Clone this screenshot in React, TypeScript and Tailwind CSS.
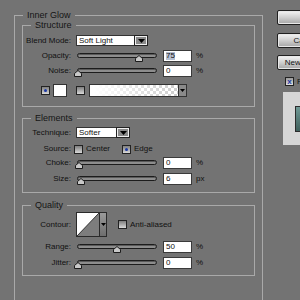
import type { ReactNode } from "react"

const line = "border-[#a9a9a9]"

function Legend({ children }: { children: ReactNode }) {
  return <legend className="ml-[8px] px-[4px] text-[9px] leading-[10px] text-[#151515]">{children}</legend>
}

function Label({ children }: { children: ReactNode }) {
  return <span className="w-[48px] shrink-0 text-right leading-none">{children}</span>
}

function Arrow() {
  return (
    <svg width="7" height="4" viewBox="0 0 7 4">
      <polygon points="0,0 7,0 3.5,4" fill="#000" />
    </svg>
  )
}

function Dropdown({ value, width }: { value: string; width: string }) {
  return (
    <div className={`ml-[5px] flex h-[11px] ${width} border border-[#333] bg-white`}>
      <span className="flex-1 pl-[2px] leading-[9px]">{value}</span>
      <span className="flex w-[12px] items-center justify-center border border-[#eee] bg-[#8a8a8a] outline outline-1 outline-[#222]">
        <Arrow />
      </span>
    </div>
  )
}

function Thumb() {
  return (
    <svg width="8" height="7" viewBox="0 0 8 7">
      <polygon points="4,0.5 7.5,3.5 7.5,6.5 0.5,6.5 0.5,3.5" fill="#c9c9c9" stroke="#1c1c1c" strokeWidth="1" />
    </svg>
  )
}

function SliderRow({ label, value, left, unit, selected }: { label: string; value: string; left: number; unit: string; selected?: boolean }) {
  return (
    <div className="flex h-[12px] items-center">
      <Label>{label}</Label>
      <div className="relative ml-[3px] h-[12px] w-[83px] shrink-0">
        <div className="ml-[3px] mt-[3px] h-[5px] w-[80px] rounded-full border border-[#1c1c1c] bg-[#8d8d8d] shadow-[inset_0_1px_0_#5a5a5a]" />
        <span className="absolute top-[5px] flex" style={{ left }}>
          <Thumb />
        </span>
      </div>
      <div className="ml-[6px] flex h-[12px] w-[29px] shrink-0 items-center border border-[#3a3a3a] bg-white pl-[2px]">
        <span className={selected ? "bg-[#b6c0d2] leading-none" : "leading-none"}>{value}</span>
      </div>
      <span className="ml-[4px] leading-none">{unit}</span>
    </div>
  )
}

function Box({ dot }: { dot?: boolean }) {
  return (
    <span className="flex h-[9px] w-[9px] shrink-0 items-center justify-center border border-[#222] bg-linear-to-b from-[#7e7e7e] to-[#dadada]">
      {dot && <span className="h-[3px] w-[3px] rounded-full bg-[#1d3aa6]" />}
    </span>
  )
}

function Button({ children }: { children: ReactNode }) {
  return (
    <div className="flex h-[15px] w-[58px] items-center justify-center rounded-[2px] border border-[#202020] bg-linear-to-b from-[#f4f4f4] via-[#cfcfcf] to-[#a5a5a5] leading-none text-[#111] shadow-[inset_0_0_0_1px_#e8e8e8]">
      {children}
    </div>
  )
}

export default function App() {
  return (
    <div className="flex h-[300px] w-[300px] overflow-hidden bg-[#737373] font-['Liberation_Sans',Arial,sans-serif] text-[8px] text-[#111]">
      <div className="w-[277px] shrink-0">
        <fieldset className={`ml-[14px] mt-[10px] h-[300px] w-[249px] border-x border-t ${line}`}>
          <Legend>Inner Glow</Legend>

          <fieldset className={`ml-[7px] w-[233px] border ${line}`}>
            <Legend>Structure</Legend>
            <div className="flex flex-col pb-[9px]">
              <div className="mt-[5px] flex h-[11px] items-center">
                <Label>Blend Mode:</Label>
                <Dropdown value="Soft Light" width="w-[72px]" />
              </div>
              <div className="mt-[4px]">
                <SliderRow label="Opacity:" value="75" left={61} unit="%" selected />
              </div>
              <div className="mt-[3px]">
                <SliderRow label="Noise:" value="0" left={0} unit="%" />
              </div>
              <div className="mt-[7px] flex h-[13px] items-center pl-[18px]">
                <Box dot />
                <span className="ml-[3px] h-[13px] w-[14px] border border-[#333] bg-white" />
                <span className="ml-[9px] flex"><Box /></span>
                <div className="ml-[4px] flex h-[13px] border border-[#333]">
                  <span className="h-full w-[88px] [background-image:linear-gradient(to_right,#fff_5%,rgba(255,255,255,0)_95%),repeating-conic-gradient(#cfcfcf_0_25%,#fff_0_50%)] [background-size:100%_100%,6px_6px]" />
                  <span className="flex w-[8px] items-center justify-center border-l border-[#333] bg-[#8a8a8a]">
                    <svg width="5" height="3" viewBox="0 0 5 3"><polygon points="0,0 5,0 2.5,3" fill="#000" /></svg>
                  </span>
                </div>
              </div>
            </div>
          </fieldset>

          <fieldset className={`ml-[7px] mt-[6px] w-[233px] border ${line}`}>
            <Legend>Elements</Legend>
            <div className="flex flex-col pb-[7px]">
              <div className="mt-[4px] flex h-[11px] items-center">
                <Label>Technique:</Label>
                <Dropdown value="Softer" width="w-[54px]" />
              </div>
              <div className="mt-[6px] flex h-[10px] items-center">
                <Label>Source:</Label>
                <div className="ml-[3px] flex w-[48px] items-center">
                  <Box />
                  <span className="ml-[3px] leading-none">Center</span>
                </div>
                <Box dot />
                <span className="ml-[3px] leading-none">Edge</span>
              </div>
              <div className="mt-[3px]">
                <SliderRow label="Choke:" value="0" left={1} unit="%" />
              </div>
              <div className="mt-[4px]">
                <SliderRow label="Size:" value="6" left={3} unit="px" />
              </div>
            </div>
          </fieldset>

          <fieldset className={`ml-[7px] mt-[7px] w-[233px] border ${line}`}>
            <Legend>Quality</Legend>
            <div className="flex flex-col pb-[6px]">
              <div className="mt-[2px] flex h-[25px] items-center">
                <Label>Contour:</Label>
                <div className="ml-[5px] flex h-[25px] w-[31px] border border-[#2a2a2a]">
                  <svg width="22" height="23" viewBox="0 0 22 23" className="block">
                    <rect width="22" height="23" fill="#7d7d7d" />
                    <polygon points="0,0 22,0 0,23" fill="#fff" />
                    <line x1="0" y1="23" x2="22" y2="0" stroke="#333" strokeWidth="1" />
                  </svg>
                  <span className="flex flex-1 items-center justify-center border-l border-[#2a2a2a] bg-linear-to-b from-[#9a9a9a] to-[#6e6e6e]">
                    <svg width="5" height="3" viewBox="0 0 5 3"><polygon points="0,0 5,0 2.5,3" fill="#000" /></svg>
                  </span>
                </div>
                <span className="ml-[11px] flex"><Box /></span>
                <span className="ml-[3px] leading-none">Anti-aliased</span>
              </div>
              <div className="mt-[4px]">
                <SliderRow label="Range:" value="50" left={39} unit="%" />
              </div>
              <div className="mt-[4px]">
                <SliderRow label="Jitter:" value="0" left={0} unit="%" />
              </div>
            </div>
          </fieldset>
        </fieldset>
      </div>

      <div className="flex w-[80px] shrink-0 flex-col pt-[10px]">
        <Button>OK</Button>
        <div className="mt-[8px]"><Button>Cancel</Button></div>
        <div className="mt-[7px]"><Button>New Style...</Button></div>
        <div className="mt-[7px] flex h-[9px] items-center pl-[8px]">
          <span className="flex h-[9px] w-[9px] items-center justify-center border border-[#222] bg-linear-to-b from-[#9a9a9a] to-[#e0e0e0] text-[8px] font-bold leading-none text-[#1d3aa6]">x</span>
          <span className="ml-[3px] leading-none">Preview</span>
        </div>
        <div className="ml-[6px] mt-[6px] h-[53px] w-[60px] bg-[#d6d6d6] pl-[12px] pt-[14px]">
          <div className="h-[26px] w-[30px] border border-[#2c2c2c] bg-linear-to-b from-[#6f9995] to-[#3f5f5b]" />
        </div>
      </div>
    </div>
  )
}
